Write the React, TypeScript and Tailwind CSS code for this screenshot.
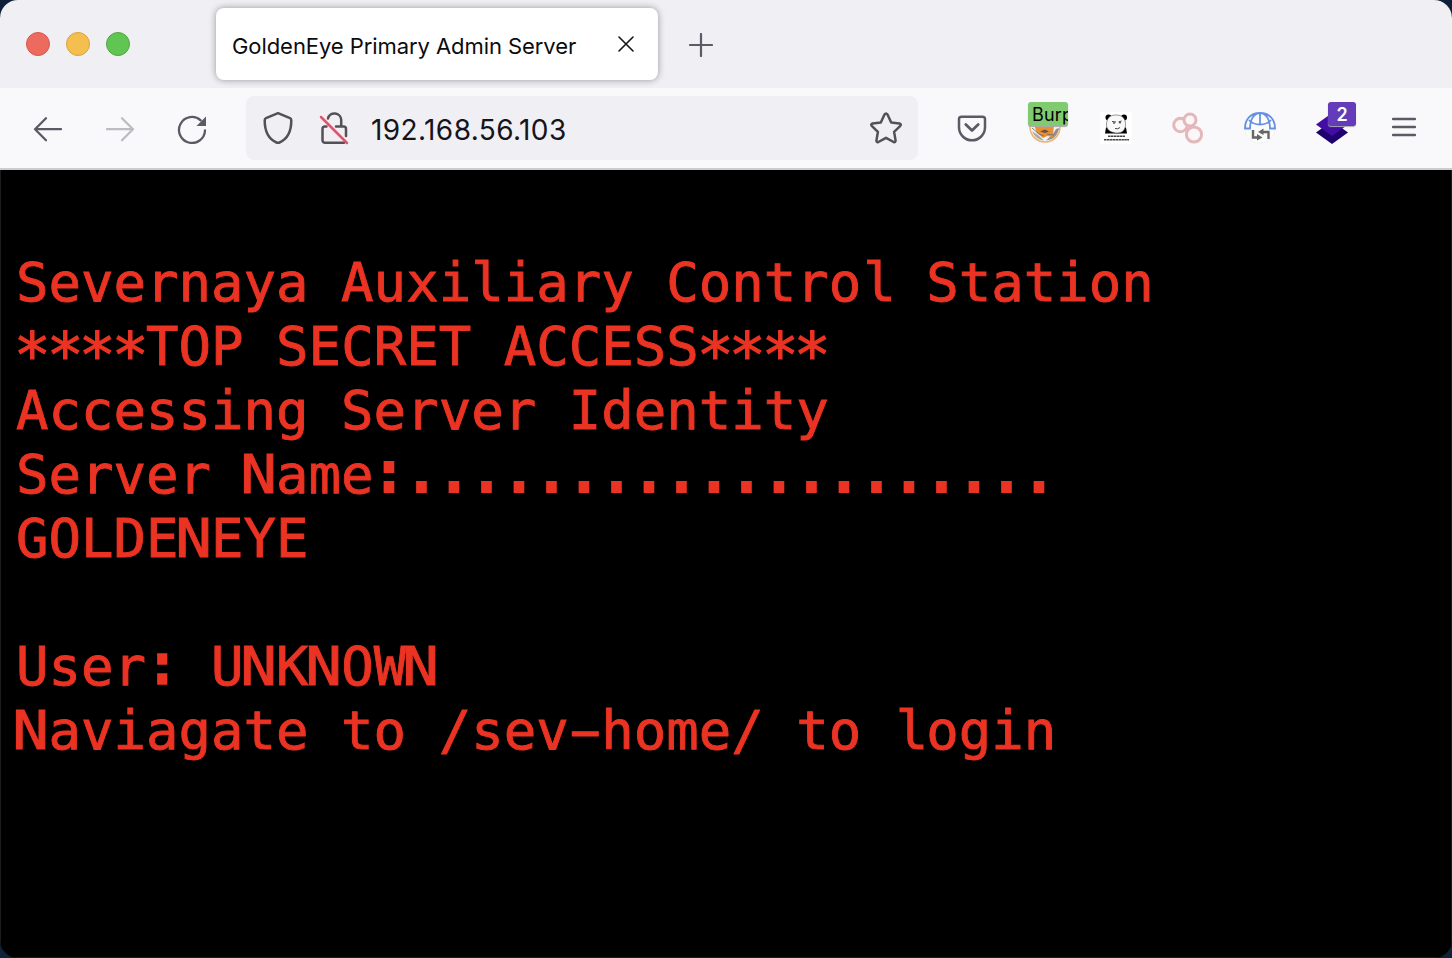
import React from "react";

const stroke = { fill: "none", strokeWidth: 2, strokeLinecap: "round", strokeLinejoin: "round" } as const;

function Stars() {
  return (
    <>
      {[0, 1, 2, 3].map((i) => (
        <span key={i} className="inline-block translate-y-[9px] scale-[1.14] leading-none">*</span>
      ))}
    </>
  );
}

function WideN() {
  return <span className="inline-block origin-[88%_50%] scale-x-[1.13] leading-none">N</span>;
}

function TabBar() {
  return (
    <div className="flex h-[88px] items-start bg-[#f0eff4]">
      <div className="flex w-[216px] gap-4 pl-[26px] pt-8">
        <span className="size-6 rounded-full border border-[#d8574c] bg-[#ec6a5e]" />
        <span className="size-6 rounded-full border border-[#d9a23c] bg-[#f4bf4f]" />
        <span className="size-6 rounded-full border border-[#4fa73c] bg-[#61c554]" />
      </div>
      <div className="mt-2 flex h-[72px] w-[442px] items-center justify-between rounded-lg bg-white pl-4 pr-[24px] shadow-[0_0_7px_rgba(0,0,0,0.38)]">
        <span className="whitespace-nowrap pt-1 text-[22px] leading-7 tracking-[-0.07px] text-[#0c0c0d]">
          GoldenEye Primary Admin Server
        </span>
        <svg width="16" height="16" viewBox="0 0 16 16" stroke="#15141a" {...stroke} strokeWidth={1.6}>
          <path d="M1 1l14 14M15 1L1 15" />
        </svg>
      </div>
      <svg className="ml-[31px] mt-[33px]" width="24" height="24" viewBox="0 0 24 24" stroke="#5b5b66" {...stroke} strokeWidth={2.2}>
        <path d="M12 1v22M1 12h22" />
      </svg>
    </div>
  );
}

function Toolbar() {
  return (
    <div className="flex h-[82px] items-center border-b-2 border-[#cccccf] bg-[#f9f9fb]">
      <svg className="ml-8" width="32" height="32" viewBox="0 0 32 32" stroke="#5b5b66" {...stroke} strokeWidth={2.3}>
        <path d="M14 6L3 17l11 11M3 17h26" transform="translate(0 .2)" />
      </svg>
      <svg className="ml-10" width="32" height="32" viewBox="0 0 32 32" stroke="#bcbcc2" {...stroke} strokeWidth={2.3}>
        <path d="M18 6l11 11-11 11M3 17h26" transform="translate(0 .2)" />
      </svg>
      <svg className="ml-10" width="32" height="32" viewBox="0 0 32 32" stroke="#5b5b66" {...stroke} strokeWidth={2.3}>
        <path d="M29 18.500a13 13 0 1 1-4.300-10.200" />
        <path d="M30 4.500v9.500H20.500z" fill="#5b5b66" stroke="none" />
      </svg>
      <div className="ml-[38px] flex h-16 w-[672px] items-center rounded-lg bg-[#f0eff4] pl-4 pr-4">
        <svg width="32" height="34" viewBox="0 0 32 34" stroke="#515156" {...stroke} strokeWidth={2.5}>
          <path d="M16 2.200L28 7.200q1.300.5 1.300 2c0 11-4.300 19-11.800 22.300q-1.500.7-3 0C7 28.200 2.700 20.200 2.700 9.200q0-1.500 1.300-2z" />
        </svg>
        <svg className="ml-[25px]" width="32" height="34" viewBox="0 0 32 34" stroke="#515156" {...stroke} strokeWidth={2.5}>
          <path d="M9 7.500a6.700 6.700 0 0 1 13.200 1.300V15.500M7.500 15.500H6A2.500 2.500 0 0 0 3.500 18V29.300A2.500 2.500 0 0 0 6 31.800h19M17 15.500h7.500a2.500 2.500 0 0 1 2.500 2.500V25" />
          <path d="M2 6l26 26" stroke="#e9506f" />
        </svg>
        <span className="ml-5 flex-1 pt-[3px] text-[28px] leading-9 tracking-[0.4px] text-[#15141a]">192.168.56.103</span>
        <svg width="32" height="32" viewBox="0 0 32 32" stroke="#515156" {...stroke} strokeWidth={2.5}>
          <path d="M14.500 2.500q1.500-2 3 0l3.700 8 8.300 1q2 .6.800 2.400l-6.200 6 1.500 8.700q-.2 2-2 1.400L16 25.800 8.400 30q-1.800.6-2-1.400l1.500-8.700-6.200-6q-1.200-1.800.8-2.400l8.300-1z" />
        </svg>
      </div>
      <svg className="ml-[39px]" width="30" height="28" viewBox="0 0 30 28" stroke="#5b5b66" {...stroke} strokeWidth={2.5}>
        <path d="M4.500 2.800h21a2.500 2.500 0 0 1 2.500 2.500v8a13 13 0 0 1-26 0v-8A2.500 2.500 0 0 1 4.500 2.800z" />
        <path d="M8.800 10.500l6.200 6 6.200-6" strokeWidth={2.800} />
      </svg>
      <div className="relative ml-[41px] size-10">
        <svg className="absolute left-0 top-0.5" width="34" height="34" viewBox="0 0 34 34">
          <circle cx="17" cy="17" r="15" fill="#f4f4f4" stroke="#eeb06e" strokeWidth="1.500" />
          <path d="M31 18c-1 7-6 12-13 12.500l7-6.500 3-5z" fill="#909090" />
          <path d="M4 21c2 5 6 9 12 9.500L10 25z" fill="#aaa" />
          <path d="M6 15l20-1-1 13-6-1-4 2-6-5z" fill="#e98f35" />
          <path d="M12 21.500l5-2 4 2-4 1.500z" fill="#665348" />
          <path d="M4 18l7 6 5 2M19 24l7 1" stroke="#777" strokeWidth="1" fill="none" />
        </svg>
        <span className="absolute left-0 -top-[6px] h-6 w-10 overflow-hidden rounded-[3px] bg-[#80cb70] pl-1 text-[18px] leading-[26px] tracking-[0.2px] text-black shadow-[0_1px_1px_#aaa]">
          Burp
        </span>
      </div>
      <svg className="ml-8" width="32" height="32" viewBox="0 0 32 32">
        <path d="M0 0h32v32H0z" fill="#fff" />
        <circle cx="8.500" cy="5.500" r="3" />
        <circle cx="24" cy="5.500" r="3" />
        <path d="M5 21.500l1-6h20l1 6z" />
        <path d="M16 3c7 0 9.500 4 9.500 9.500 0 5-3 8.500-8 8.500S6.500 19 6.500 13C6.500 7 9 3 16 3z" fill="#f8f8f8" stroke="#333" strokeWidth=".5" />
        <path d="M12 9.500l4 .5M18.500 10l3-1M15 16.500q3 1 5-1" stroke="#333" strokeWidth=".9" fill="none" />
        <circle cx="14" cy="11" r=".8" /><circle cx="20" cy="10.800" r=".8" />
        <path d="M8 24.300h17M4 27.700h25" stroke="#444" strokeWidth="1.500" strokeDasharray="2.500 .4" />
      </svg>
      <svg className="ml-10" width="32" height="32" viewBox="0 0 32 32" fill="#fbf6f7" stroke="#e2b8bb" strokeWidth="3">
        <circle cx="8.500" cy="13" r="6.800" />
        <circle cx="18" cy="8" r="6" />
        <circle cx="22" cy="22.500" r="7.600" />
      </svg>
      <svg className="ml-10" width="32" height="32" viewBox="0 0 32 32" fill="none" stroke="#6691e3" strokeWidth="1.800">
        <circle cx="16" cy="16" r="15.500" stroke="#eeeeef" strokeWidth=".7" fill="#fbfbfc" />
        <path d="M1 16.500C1 7 7 1 16 1s15 6 15 15.500h-5c0-9-4-15.500-10-15.500S6 7.500 6 16.500zM16 1v12M5 8c5 6 17 6 22 0" />
        <path d="M9 18v7.500h5M24.500 27v-7h-6" stroke="#666" strokeWidth="2.400" />
        <path d="M13 22l5.500 3.500-5.500 3zM19.500 16.500L14 20l5.500 3z" fill="#666" stroke="none" />
      </svg>
      <div className="relative ml-10 h-10 w-10">
        <svg className="absolute left-0 top-1" width="32" height="32" viewBox="0 0 32 32">
          <path d="M16 9l16 11.500L16 32 0 20.500z" fill="#1f0070" />
          <path d="M16 1l16 11.500L16 24 0 12.500z" fill="#420ca5" />
        </svg>
        <span className="absolute left-3 -top-[6px] h-6 w-7 rounded-[3px] bg-[#643bb9] text-center text-[18px] font-semibold leading-[26px] text-white shadow-[0_1px_1px_#aaa]">
          2
        </span>
      </div>
      <svg className="ml-9 -mt-0.5" width="24" height="20" viewBox="0 0 24 20" stroke="#5b5b66" {...stroke} strokeWidth={2.300}>
        <path d="M1 2h22M1 10h22M1 18h22" />
      </svg>
    </div>
  );
}

export default function App() {
  return (
    <div className="h-[958px] w-[1452px] overflow-hidden bg-[#0e2138] font-['Inter',sans-serif]">
      <div className="flex h-full flex-col overflow-hidden rounded-[18px] bg-black">
        <TabBar />
        <Toolbar />
        <main className="flex-1 whitespace-pre border-x border-b border-[#1c1c1c] pl-[15px] pt-[81px] font-['DejaVu_Sans_Mono',monospace] text-[54px] leading-[64px] text-[#eb3323] [-webkit-text-stroke:0.9px_#eb3323]">
          <div>Severnaya Auxiliary Contro<span className="relative left-0.5">l</span> Station</div>
          <div><Stars />TOP SECRET ACCESS<Stars /></div>
          <div>Accessing Server Identity</div>
          <div>
            Server <WideN />ame
            <span className="relative -left-px -top-[2px] [-webkit-text-stroke:4px_#eb3323]">:....................</span>
          </div>
          <div>GOLDE<WideN />EYE</div>
          <div className="h-16" />
          <div>
            User<span className="relative -top-[2px] [-webkit-text-stroke:3.5px_#eb3323]">:</span> U<WideN />K<WideN />OW<WideN />
          </div>
          <div><WideN />aviagate to /sev<span className="inline-block scale-x-[1.85] leading-none">-</span>home/ to <span className="relative left-0.5">l</span>ogin</div>
        </main>
      </div>
    </div>
  );
}
